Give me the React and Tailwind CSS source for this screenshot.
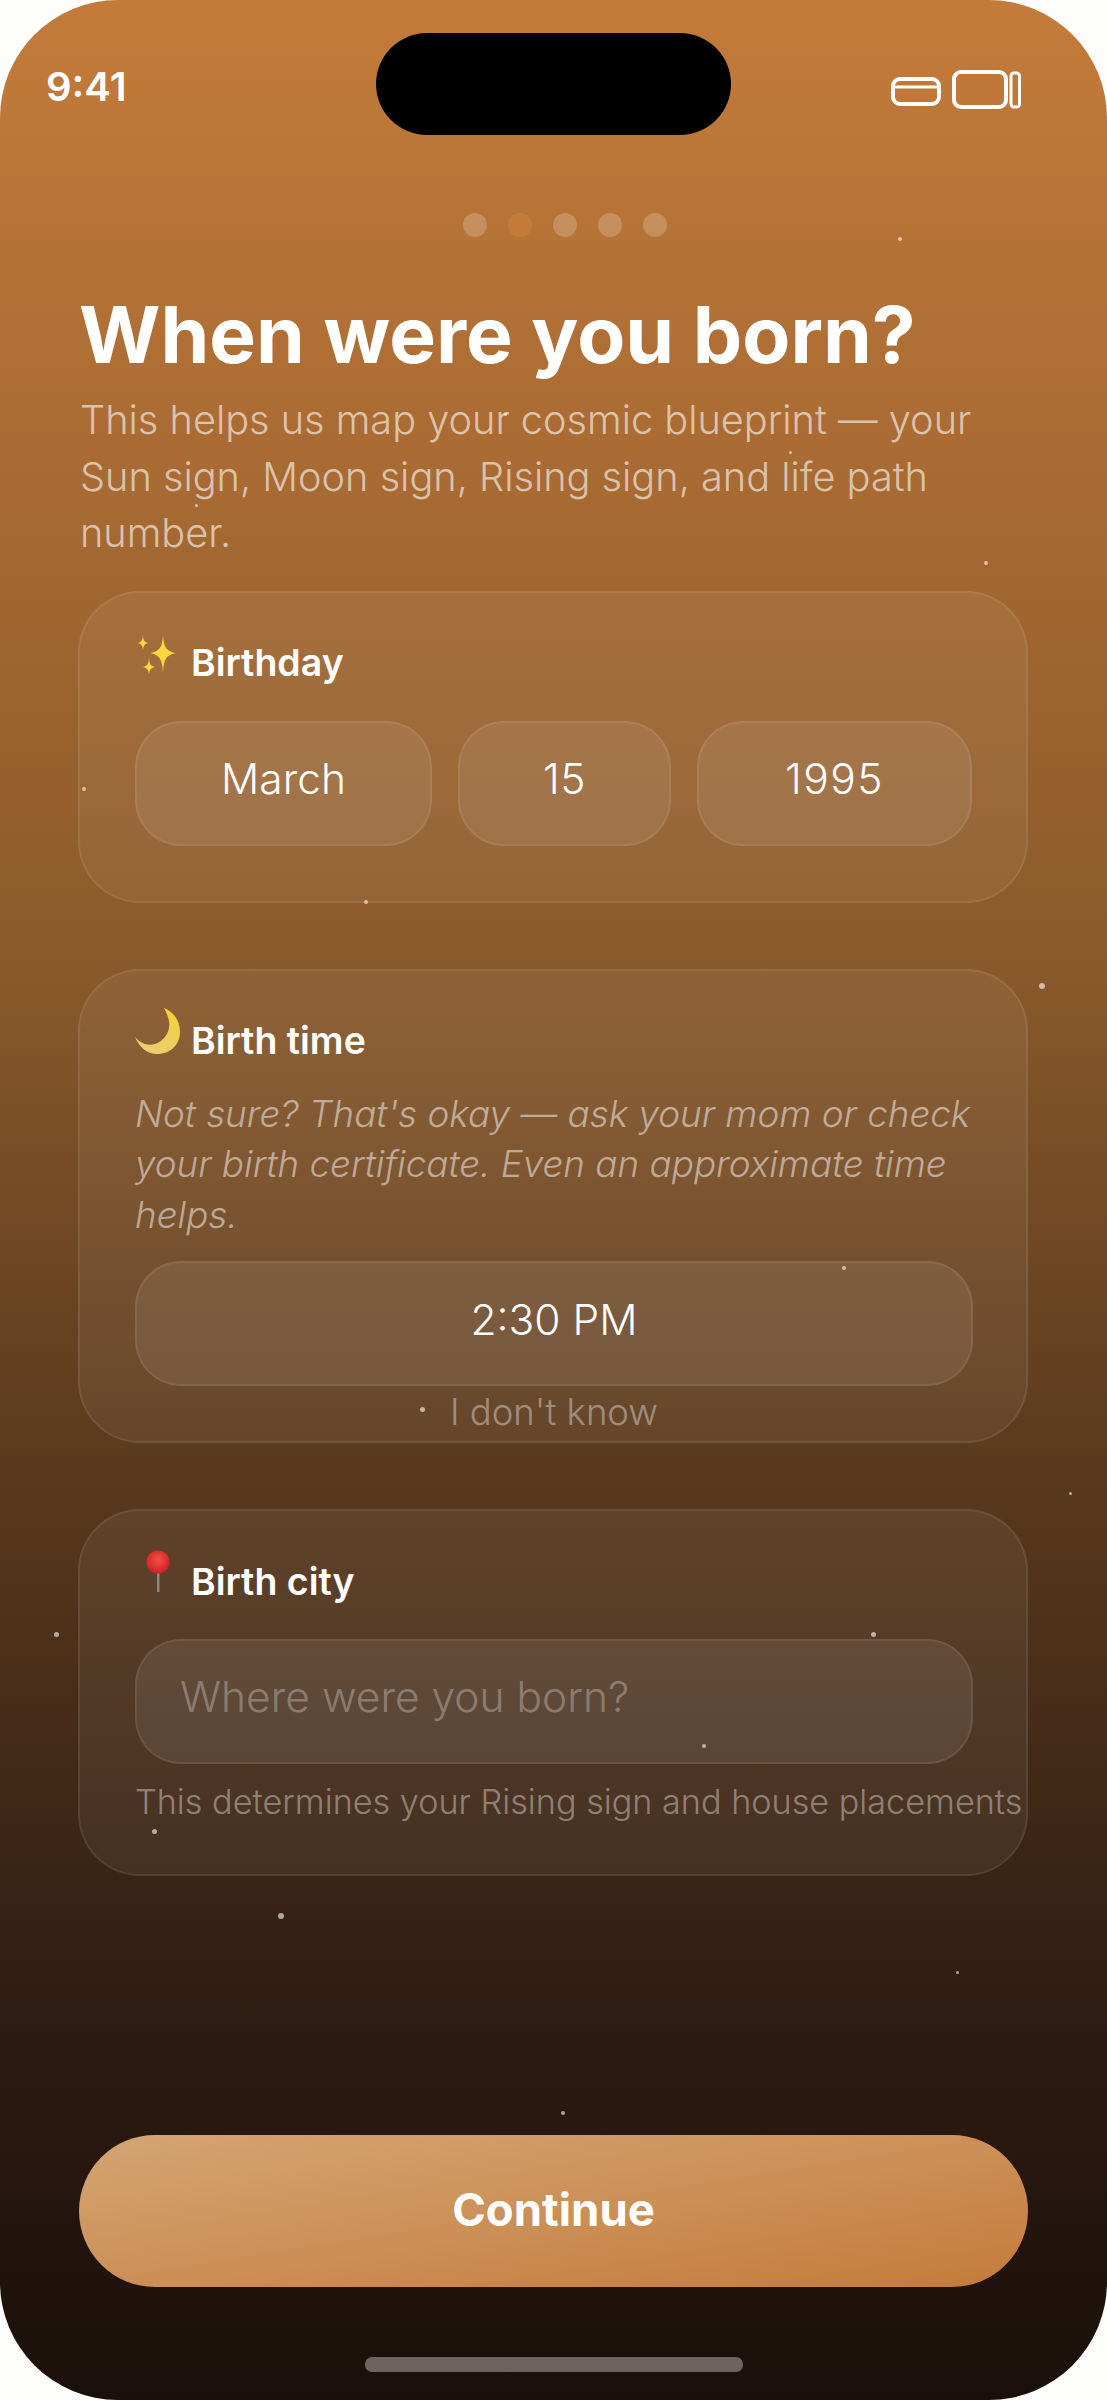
const stars = [
  [900, 239, 4], [505, 414, 3], [790, 452, 3], [196, 505, 3], [986, 563, 4], [84, 789, 4], [366, 902, 4],
  [1042, 986, 6], [844, 1268, 4], [422, 1409, 5], [1070, 1493, 3], [56, 1634, 5], [873, 1634, 5], [704, 1746, 4],
  [154, 1831, 5], [281, 1916, 6], [957, 1972, 3], [563, 2113, 4],
];

function Sparkles() {
  return (
    <svg width="42" height="44" viewBox="0 0 42 44" className="shrink-0">
      <path d="M28 2 C28.800 14 31 18 40.500 20 C31 22 28.800 27 28 39 C27.200 27 25 22 15.500 20 C25 18 27.200 14 28 2Z" fill="#fcd63f" />
      <path d="M8 2 C8.400 7 9 9 13 10 C9 11 8.400 13 8 18 C7.600 13 7 11 3 10 C7 9 7.600 7 8 2Z" fill="#fcd63f" />
      <path d="M14 25 C14.400 31 15.500 33 20 34 C15.500 35 14.400 37 14 42 C13.600 37 12.500 35 8 34 C12.500 33 13.600 31 14 25Z" fill="#fcd63f" />
    </svg>
  );
}

function Moon() {
  return (
    <svg width="46" height="48" viewBox="0 0 46 48" className="shrink-0">
      <defs>
        <linearGradient id="moon" x1="0.800" y1="0" x2="0.600" y2="1">
          <stop offset="0" stopColor="#f5cf35" />
          <stop offset="1" stopColor="#ecce6e" />
        </linearGradient>
      </defs>
      <path d="M29 0 C39 4 45 13 45 24 C45 37 35 46 22 46 C12 46 4 39 0 29 C6 36 13 38 20 36 C30 33 36 22 34 13 C33 8 31 4 29 0Z" fill="url(#moon)" />
    </svg>
  );
}

function Pin() {
  return (
    <svg width="26" height="44" viewBox="0 0 26 44" className="shrink-0">
      <defs>
        <radialGradient id="pin" cx="0.5" cy="0.4" r="0.6">
          <stop offset="0" stopColor="#f2504a" />
          <stop offset="1" stopColor="#cf1f22" />
        </radialGradient>
      </defs>
      <rect x="12" y="20" width="2.500" height="22" fill="#8a8580" />
      <circle cx="13" cy="12" r="11.500" fill="url(#pin)" />
    </svg>
  );
}

function Label({ icon, offset, textClass, children }) {
  return (
    <div className="flex items-start h-[66px]">
      <div className={offset}>{icon}</div>
      <span className={`font-semibold text-[37.500px] leading-[46px] text-white ${textClass}`}>{children}</span>
    </div>
  );
}

function Field({ className, children }) {
  return (
    <div className={`h-[125px] pb-[8px] rounded-[46px] border-2 border-white/[0.08] bg-white/[0.08] flex items-center text-[42.500px] font-light text-white ${className}`}>
      {children}
    </div>
  );
}

function Card({ className, children }) {
  return (
    <section className={`ml-[78px] mr-[79px] rounded-[62px] border-2 border-white/[0.08] bg-white/[0.06] pl-[55px] pr-[53px] ${className}`}>
      {children}
    </section>
  );
}

export default function App() {
  return (
    <div className="w-[1107px] h-[2400px] bg-[#fdfdfb] font-['Inter',sans-serif]">
      <div className="relative w-full h-full rounded-[118px] overflow-hidden flex flex-col bg-[linear-gradient(180deg,#c47b3a_0%,#8b5a2b_40%,#5c3b1e_60%,#2d1b12_85%,#1a0f0a_100%)]">
        <header className="h-[174px] shrink-0 flex items-center justify-between pl-[46px] pr-[86px]">
          <span className="font-semibold text-[40px] leading-none text-white">9:41</span>
          <svg width="130" height="40" viewBox="0 0 130 40" fill="none" stroke="white" className="mt-[6px]">
            <rect x="2" y="9" width="46" height="25" rx="7" strokeWidth="4" />
            <path d="M2 17 H48" strokeWidth="3" />
            <rect x="63" y="2" width="52" height="35" rx="7" strokeWidth="4" />
            <rect x="120" y="3" width="8.500" height="34" rx="3" strokeWidth="3" />
          </svg>
        </header>

        <div className="absolute left-[376px] top-[33px] w-[355px] h-[102px] rounded-[51px] bg-black" />

        <div className="mt-[39px] flex justify-center gap-[21px] pl-[22px]">
          <span className="w-[24px] h-[24px] rounded-full bg-white/20" />
          <span className="w-[24px] h-[24px] rounded-full bg-[#c47b3a]" />
          <span className="w-[24px] h-[24px] rounded-full bg-white/20" />
          <span className="w-[24px] h-[24px] rounded-full bg-white/20" />
          <span className="w-[24px] h-[24px] rounded-full bg-white/20" />
        </div>

        <h1 className="mt-[48px] pl-[79px] font-bold text-[78.500px] leading-[100px] text-white whitespace-nowrap">When were you born?</h1>
        <p className="mt-[7px] pl-[80px] pr-[70px] text-[39.700px] font-light leading-[56.500px] text-white/60">
          This helps us map your cosmic blueprint — your Sun sign, Moon sign, Rising sign, and life path number.
        </p>

        <Card className="mt-[29px] h-[312px] pt-[40px]">
          <Label icon={<Sparkles />} offset="w-[56px]" textClass="mt-[7px]">Birthday</Label>
          <div className="mt-[22px] flex gap-[26px]">
            <Field className="w-[297px] justify-center">March</Field>
            <Field className="w-[213px] justify-center tracking-[0.5px]">15</Field>
            <Field className="w-[275px] justify-center tracking-[1.500px]">1995</Field>
          </div>
        </Card>

        <Card className="mt-[66px] h-[474px] pt-[37px]">
          <Label icon={<Moon />} offset="w-[56px]" textClass="mt-[10px]">Birth time</Label>
          <p className="mt-[15px] text-[36.800px] font-light leading-[50.500px] italic text-white/50">
            Not sure? That's okay — ask your mom or check your birth certificate. Even an approximate time helps.
          </p>
          <Field className="mt-[21px] justify-center">2:30 PM</Field>
          <p className="mt-[3px] text-center text-[36.500px] font-light leading-[46px] text-white/40">I don't know</p>
        </Card>

        <Card className="mt-[66px] h-[367px] pt-[39px]">
          <Label icon={<Pin />} offset="w-[56px] pl-[10px]" textClass="mt-[9px]">Birth city</Label>
          <Field className="mt-[23px] px-[43px] !text-white/30">Where were you born?</Field>
          <p className="mt-[16px] text-[34.200px] font-light leading-[44px] text-white/40 whitespace-nowrap">This determines your Rising sign and house placements</p>
        </Card>

        <button className="mt-auto ml-[79px] mr-[79px] h-[152px] pb-[2px] shrink-0 rounded-[76px] bg-[linear-gradient(to_bottom_right,#d4a574,#c47b3a)] font-bold text-[45.500px] text-white">Continue</button>

        <div className="mt-[70px] mb-[28px] mx-auto w-[378px] h-[15px] shrink-0 rounded-[7px] bg-white/35" />

        {stars.map(([x, y, s]) => (
          <span
            key={`${x}-${y}`}
            className="absolute rounded-full bg-white/60"
            style={{ left: x - s / 2, top: y - s / 2, width: s, height: s }}
          />
        ))}
      </div>
    </div>
  );
}
